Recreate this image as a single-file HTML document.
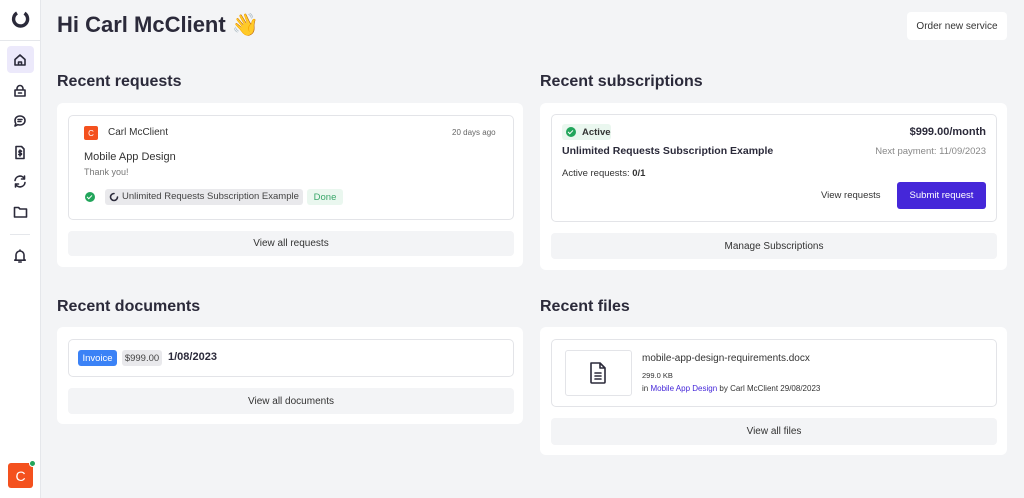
<!DOCTYPE html>
<html><head><meta charset="utf-8"><style>
*{box-sizing:border-box;margin:0;padding:0}
body{width:1024px;height:498px;background:#f3f4f6;font-family:"Liberation Sans",sans-serif;color:#2b2a3a;position:relative;overflow:hidden}
.abs{position:absolute}
.side{left:0;top:0;width:41px;height:498px;background:#fff;border-right:1px solid #e5e7eb}
.card{background:#fff;border-radius:6px}
.inner{background:#fff;border:1px solid #e3e4e8;border-radius:5px}
.btn{background:#f3f4f6;border-radius:4px;font-size:10px;color:#333;display:flex;align-items:center;justify-content:center}
.fc{display:flex;align-items:center;justify-content:center}
h2{position:absolute;font-size:16px;font-weight:bold;color:#2b2a3a}
.t{position:absolute;white-space:nowrap}
svg.i{position:absolute;fill:none;stroke:#2b2a3a;stroke-width:1.6;stroke-linecap:round;stroke-linejoin:round}
.ok{position:absolute;width:10px;height:10px;background:#22a55b;border-radius:50%}
.ok:after{content:"";position:absolute;left:3.3px;top:1.8px;width:2px;height:4px;border:solid #fff;border-width:0 1.3px 1.3px 0;transform:rotate(45deg)}
</style></head><body>
<div class="abs side">
 <svg class="i" style="left:10px;top:9px" width="21" height="21" viewBox="0 0 21 21"><path d="M14.5 4.2 A7 7 0 1 1 7 4" stroke-width="3.4" stroke-linecap="butt"/></svg>
 <div class="abs" style="left:0;top:40px;width:40px;height:1px;background:#e5e7eb"></div>
 <div class="abs" style="left:7px;top:46px;width:27px;height:27px;background:#ece9fb;border-radius:4px"></div>
 <svg class="i" style="left:13px;top:53px" width="14" height="14" viewBox="0 0 14 14" stroke-width="1.3"><path d="M2 6.5 7 2l5 4.5V12H2z M5.5 12V9h3v3"/></svg>
 <svg class="i" style="left:13px;top:84px" width="14" height="14" viewBox="0 0 14 14" stroke-width="1.3"><path d="M2 6h10v6H2z M4 6V4.5a3 3 0 0 1 6 0V6 M5.5 9h3"/></svg>
 <svg class="i" style="left:13px;top:114px" width="14" height="14" viewBox="0 0 14 14" stroke-width="1.3"><path d="M7 2c3 0 5 2 5 4.5S10 11 7 11c-.8 0-1.5 0-2.2-.3L2 12l.8-2.4C2.3 8.7 2 7.6 2 6.5 2 4 4 2 7 2z M5 5.5h4 M5 7.5h3"/></svg>
 <svg class="i" style="left:13px;top:145px" width="14" height="15" viewBox="0 0 14 15" stroke-width="1.3"><path d="M3 1.5h5.5L11 4v9.5H3z M7 5v6 M8.5 6.2C8 5.7 6 5.5 6 6.8s2.5.8 2.5 2.1S6.5 10 5.8 9.5"/></svg>
 <svg class="i" style="left:12px;top:174px" width="16" height="15" viewBox="0 0 16 15" stroke-width="1.6"><path d="M3 6.5A5 5 0 0 1 12.5 5 M13 8.5A5 5 0 0 1 3.5 10 M12.5 2v3h-3 M3.5 13v-3h3"/></svg>
 <svg class="i" style="left:13px;top:205px" width="15" height="14" viewBox="0 0 15 14" stroke-width="1.3"><path d="M1.5 2.5h4l1.5 1.5h6.5v8h-12z"/></svg>
 <div class="abs" style="left:10px;top:234px;width:20px;height:1px;background:#e5e7eb"></div>
 <svg class="i" style="left:13px;top:248px" width="14" height="16" viewBox="0 0 14 16" stroke-width="1.3"><path d="M3 11V7a4 4 0 0 1 8 0v4l1.2 1.2H1.8z M7 2v1 M5.8 14h2.4"/></svg>
 <div class="abs fc" style="left:8px;top:463px;width:25px;height:25px;background:#f4511e;border-radius:3px;color:#fff;font-size:14px">C</div>
 <div class="abs" style="left:29px;top:460px;width:7px;height:7px;background:#22a55b;border-radius:50%;border:1px solid #fff"></div>
</div>

<div class="t" style="left:57px;top:12px;font-size:22px;font-weight:bold">Hi Carl McClient <span style="font-family:'Noto Color Emoji','DejaVu Sans',sans-serif">👋</span></div>
<div class="abs fc" style="left:907px;top:12px;width:100px;height:28px;background:#fff;border-radius:4px;font-size:10px;color:#333">Order new service</div>

<h2 style="left:57px;top:73px">Recent requests</h2>
<div class="abs card" style="left:57px;top:103px;width:466px;height:164px"></div>
<div class="abs inner" style="left:68px;top:115px;width:446px;height:105px"></div>
<div class="abs fc" style="left:84px;top:126px;width:14px;height:14px;background:#f4511e;border-radius:2px;color:#fff;font-size:8px">C</div>
<div class="t" style="left:108px;top:127px;font-size:10px;color:#333">Carl McClient</div>
<div class="t" style="left:452px;top:128px;font-size:8px;color:#666">20 days ago</div>
<div class="t" style="left:84px;top:151px;font-size:11px;color:#333">Mobile App Design</div>
<div class="t" style="left:84px;top:167px;font-size:9px;color:#777">Thank you!</div>
<div class="ok" style="left:85px;top:192px"></div>
<div class="abs" style="left:105px;top:189px;width:198px;height:16px;background:#e9e9ec;border-radius:3px;font-size:9.5px;line-height:16px;color:#444;padding-left:17px;white-space:nowrap">Unlimited Requests Subscription Example</div>
<svg class="i" style="left:109px;top:192px" width="10" height="10" viewBox="0 0 10 10" stroke="#555" stroke-width="1.2"><path d="M8.5 5A3.5 3.5 0 1 1 5 1.5"/></svg>
<div class="abs fc" style="left:307px;top:189px;width:36px;height:16px;background:#eaf7ef;border-radius:3px;font-size:9.5px;color:#3aa76a">Done</div>
<div class="abs btn" style="left:68px;top:231px;width:446px;height:25px">View all requests</div>

<h2 style="left:540px;top:73px">Recent subscriptions</h2>
<div class="abs card" style="left:540px;top:103px;width:467px;height:167px"></div>
<div class="abs inner" style="left:551px;top:114px;width:446px;height:108px"></div>
<div class="abs" style="left:562px;top:124px;width:49px;height:16px;background:#eaf7ef;border-radius:3px"></div>
<div class="ok" style="left:566px;top:127px"></div>
<div class="t" style="left:582px;top:127px;font-size:9.5px;font-weight:bold;color:#333">Active</div>
<div class="t" style="right:38px;top:126px;font-size:11px;font-weight:bold">$999.00/month</div>
<div class="t" style="left:562px;top:145px;font-size:10.5px;font-weight:bold">Unlimited Requests Subscription Example</div>
<div class="t" style="right:38px;top:146px;font-size:9.5px;color:#888">Next payment: 11/09/2023</div>
<div class="t" style="left:562px;top:168px;font-size:9.5px;color:#333">Active requests: <b>0/1</b></div>
<div class="t" style="left:821px;top:190px;font-size:9.5px;color:#333">View requests</div>
<div class="abs fc" style="left:897px;top:182px;width:89px;height:27px;background:#4527d9;border-radius:3px;color:#fff;font-size:9.5px">Submit request</div>
<div class="abs btn" style="left:551px;top:233px;width:446px;height:26px">Manage Subscriptions</div>

<h2 style="left:57px;top:298px">Recent documents</h2>
<div class="abs card" style="left:57px;top:327px;width:466px;height:97px"></div>
<div class="abs inner" style="left:68px;top:339px;width:446px;height:38px"></div>
<div class="abs fc" style="left:78px;top:350px;width:39px;height:16px;background:#3b82f6;border-radius:3px;color:#fff;font-size:9.5px">Invoice</div>
<div class="abs fc" style="left:122px;top:350px;width:40px;height:16px;background:#e9e9ec;border-radius:3px;color:#444;font-size:9.5px">$999.00</div>
<div class="t" style="left:168px;top:351px;font-size:11px;font-weight:bold">1/08/2023</div>
<div class="abs btn" style="left:68px;top:388px;width:446px;height:26px">View all documents</div>

<h2 style="left:540px;top:298px">Recent files</h2>
<div class="abs card" style="left:540px;top:327px;width:467px;height:128px"></div>
<div class="abs inner" style="left:551px;top:339px;width:446px;height:68px"></div>
<div class="abs" style="left:565px;top:350px;width:67px;height:46px;border:1px solid #e3e4e8;border-radius:3px"></div>
<svg class="i" style="left:588px;top:361px" width="20" height="24" viewBox="0 0 20 24" stroke-width="1.6"><path d="M3 2h9l5 5v14a1 1 0 0 1-1 1H4a1 1 0 0 1-1-1z M12 2v5h5 M7 12h6 M7 15h6 M7 18h6"/></svg>
<div class="t" style="left:642px;top:353px;font-size:10px;color:#333">mobile-app-design-requirements.docx</div>
<div class="t" style="left:642px;top:371px;font-size:7.5px;color:#333">299.0 KB</div>
<div class="t" style="left:642px;top:384px;font-size:8px;color:#333">in <span style="color:#4527d9">Mobile App Design</span> by Carl McClient 29/08/2023</div>
<div class="abs btn" style="left:551px;top:418px;width:446px;height:27px">View all files</div>
</body></html>
